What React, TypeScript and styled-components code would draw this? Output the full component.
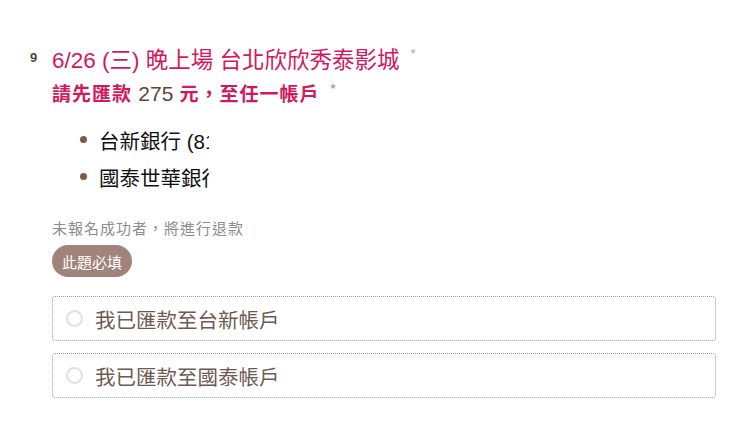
import React from "react";
import styled, { createGlobalStyle } from "styled-components";

const Global = createGlobalStyle`
  html, body { margin: 0; padding: 0; background: #fff; }
  body { font-family: "Noto Sans CJK TC", "Noto Sans", sans-serif; }
`;

const Page = styled.div`
  padding: 43px 24px 0 28px;
  display: grid;
  grid-template-columns: 24px 1fr;
`;

const Num = styled.div`
  font-family: "Liberation Sans", Arial, sans-serif;
  font-weight: 700;
  font-size: 13px;
  color: #5b4436;
  padding-top: 7px;
  padding-left: 2px;
`;

const Body = styled.div`
  display: flex;
  flex-direction: column;
`;

const Title = styled.div`
  font-size: 22.5px;
  line-height: 35px;
  color: #d4185d;
  font-family: "Liberation Sans", "Noto Sans CJK TC", sans-serif;
`;

const Star = styled.span`
  color: #a8a8a8;
  font-size: 13px;
  vertical-align: top;
  margin-left: 11px;
  line-height: 22px;
  letter-spacing: 0;
`;

const Sub = styled.div`
  font-size: 19px;
  font-weight: 700;
  letter-spacing: 1px;
  line-height: 31px;
  color: #d4185d;
  font-family: "Liberation Sans", "Noto Sans CJK TC", sans-serif;
`;

const Amount = styled.span`
  color: #5e4638;
  font-weight: 400;
  font-size: 21px;
  letter-spacing: 0;
`;

const List = styled.ul`
  margin: 11px 0 0 0;
  padding: 0;
  list-style: none;
  display: flex;
  flex-direction: column;
`;

const Item = styled.li`
  display: flex;
  align-items: center;
  height: 37px;
  font-size: 20.5px;
  color: #111;
  font-family: "Liberation Sans", "Noto Sans CJK TC", sans-serif;
`;

const Bullet = styled.span`
  width: 7px;
  height: 7px;
  border-radius: 50%;
  background: #7a5a48;
  margin-left: 28px;
  margin-right: 12px;
  flex: none;
`;

const Clip = styled.span`
  width: 110px;
  overflow: hidden;
  white-space: nowrap;
`;

const Hint = styled.div`
  margin-top: 22px;
  font-size: 15px;
  letter-spacing: 1px;
  color: #8c8c8c;
  line-height: 22px;
`;

const Badge = styled.div`
  align-self: flex-start;
  margin-top: 6px;
  height: 32px;
  padding: 0 10px;
  border-radius: 16px;
  background: #a0837a;
  color: #fff;
  font-size: 15px;
  display: flex;
  align-items: center;
`;

const Options = styled.div`
  margin-top: 19px;
  display: flex;
  flex-direction: column;
  gap: 12px;
`;

const Option = styled.label`
  height: 45px;
  box-sizing: border-box;
  border: 1px dotted #9a9a9a;
  border-radius: 3px;
  display: flex;
  align-items: center;
  padding-left: 13px;
  font-size: 20.5px;
  color: #6e5a52;
`;

const Radio = styled.span`
  width: 17px;
  height: 17px;
  box-sizing: border-box;
  border-radius: 50%;
  border: 2px solid #e0e0e0;
  margin-right: 12px;
  flex: none;
`;

export default function App() {
  return (
    <>
      <Global />
      <Page>
        <Num>9</Num>
        <Body>
          <Title>
            6/26 (三) 晚上場 台北欣欣秀泰影城<Star>*</Star>
          </Title>
          <Sub>
            請先匯款 <Amount>275</Amount> 元，至任一帳戶<Star>*</Star>
          </Sub>
          <List>
            <Item>
              <Bullet />
              <Clip>台新銀行 (812)</Clip>
            </Item>
            <Item>
              <Bullet />
              <Clip>國泰世華銀行 (013)</Clip>
            </Item>
          </List>
          <Hint>未報名成功者，將進行退款</Hint>
          <Badge>此題必填</Badge>
          <Options>
            <Option>
              <Radio />
              我已匯款至台新帳戶
            </Option>
            <Option>
              <Radio />
              我已匯款至國泰帳戶
            </Option>
          </Options>
        </Body>
      </Page>
    </>
  );
}
